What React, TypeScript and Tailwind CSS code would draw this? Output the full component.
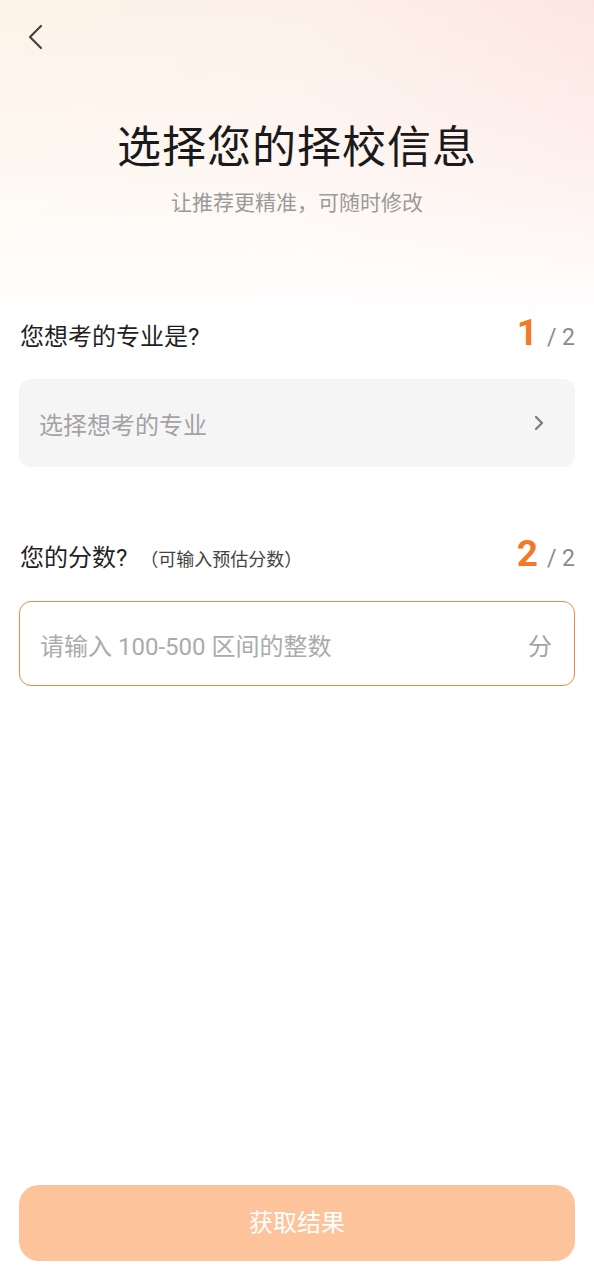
import React from "react"

const font = { fontFamily: "Roboto, 'Noto Sans CJK SC', sans-serif" }

function Counter({ n }: { n: number }) {
  return (
    <div className="flex items-baseline">
      <span className="text-[37px] leading-none font-bold text-[#f07a28]">{n}</span>
      <span className="ml-[9px] text-[23px] leading-none text-[#8a8a8a]">/ 2</span>
    </div>
  )
}

export default function App() {
  return (
    <div
      className="relative flex h-[1280px] w-full flex-col bg-white text-[#1f1f1f]"
      style={font}
    >
      {/* 顶部渐变背景 */}
      <div className="pointer-events-none absolute inset-x-0 top-0 h-[320px] bg-gradient-to-r from-[#fdf3e8] via-[#fdf1ea] to-[#fde6e2]" />
      <div className="pointer-events-none absolute inset-x-0 top-0 h-[320px] bg-gradient-to-b from-transparent via-white/40 to-white" />

      <div className="relative flex flex-1 flex-col px-[19px]">
        <button type="button" className="mt-[24px] ml-[6px] h-[26px] w-[22px]">
          <svg viewBox="0 0 22 26" className="h-[26px] w-[22px]" fill="none">
            <path d="M16 2 L5 13 L16 24" stroke="#444" strokeWidth="2.2" strokeLinecap="round" strokeLinejoin="round" />
          </svg>
        </button>

        <h1 className="mt-[72px] text-center text-[44px] leading-[52px] font-normal tracking-[1px] text-[#1a1a1a]">
          选择您的择校信息
        </h1>
        <p className="mt-[17px] text-center text-[21px] leading-[24px] text-[#9a9a9a]">
          让推荐更精准，可随时修改
        </p>

        {/* 专业 */}
        <div className="mt-[99px] flex items-baseline justify-between">
          <span className="pl-px text-[24px] leading-none">您想考的专业是?</span>
          <Counter n={1} />
        </div>
        <div className="mt-[28px] flex h-[88px] items-center justify-between rounded-[12px] bg-[#f5f5f6] pr-[30px] pl-[20px]">
          <span className="mt-[6px] text-[24px] text-[#a3a3a3]">选择想考的专业</span>
          <svg viewBox="0 0 12 16" className="h-[16px] w-[12px]" fill="none">
            <path d="M3 2 L9 8 L3 14" stroke="#7a7a7a" strokeWidth="2.2" strokeLinecap="round" strokeLinejoin="round" />
          </svg>
        </div>

        {/* 分数 */}
        <div className="mt-[68px] flex items-baseline justify-between">
          <div className="flex items-baseline">
            <span className="pl-px text-[24px] leading-none">您的分数?</span>
            <span className="ml-[13px] text-[18px] leading-none text-[#444]">（可输入预估分数）</span>
          </div>
          <div className="pl-[3px]">
            <Counter n={2} />
          </div>
        </div>
        <div className="mt-[29px] flex h-[85px] items-center justify-between rounded-[12px] border-[1.5px] border-[#ec8a40] pr-[22px] pl-[20px]">
          <span className="mt-[6px] text-[24px] text-[#ababab]">请输入 100-500 区间的整数</span>
          <span className="mt-[6px] text-[24px] text-[#a3a3a3]">分</span>
        </div>

        <div className="flex-1" />

        <button
          type="button"
          className="mb-[19px] flex h-[76px] w-full items-center justify-center rounded-[20px] bg-[#fdc49c] text-[24px] text-white"
        >
          获取结果
        </button>
      </div>
    </div>
  )
}
